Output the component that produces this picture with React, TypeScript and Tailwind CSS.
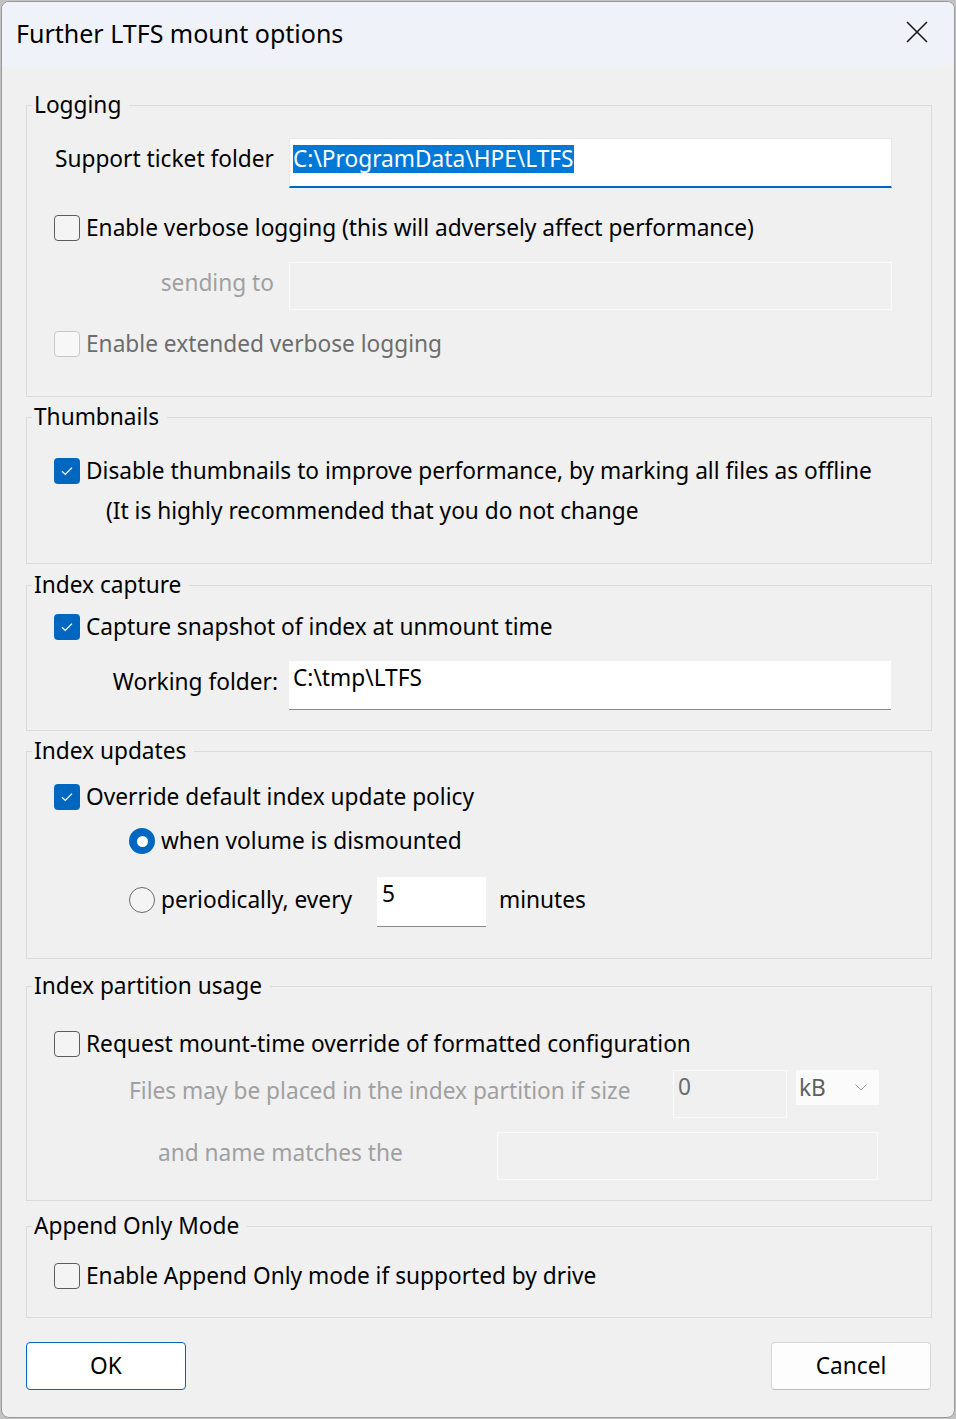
import React from "react";

function CheckBox({ checked = false, disabled = false }: { checked?: boolean; disabled?: boolean }) {
  if (checked) {
    return (
      <div className="w-[26px] h-[26px] shrink-0 rounded-[4px] bg-[#0067c0] flex items-center justify-center">
        <svg width="16" height="12" viewBox="0 0 16 12">
          <path d="M3 6.2 L6.3 9.4 L13 2.6" stroke="white" strokeWidth="1.3" fill="none" />
        </svg>
      </div>
    );
  }
  return (
    <div
      className={
        disabled
          ? "w-[26px] h-[26px] shrink-0 rounded-[4px] border border-[#c8c8c8] bg-[#f7f7f7]"
          : "w-[26px] h-[26px] shrink-0 rounded-[4px] border border-[#5c5c5c] bg-[#f4f4f4]"
      }
    />
  );
}

function Radio({ checked = false }: { checked?: boolean }) {
  if (checked) {
    return (
      <div className="w-[26px] h-[26px] shrink-0 rounded-full bg-[#0067c0] flex items-center justify-center">
        <div className="w-[11px] h-[11px] rounded-full bg-white" />
      </div>
    );
  }
  return <div className="w-[26px] h-[26px] shrink-0 rounded-full border border-[#6a6a6a] bg-[#f4f4f4]" />;
}

function Group({ title, className, children }: { title: string; className: string; children: React.ReactNode }) {
  return (
    <fieldset className={"border border-[#dadada] ml-[24px] mr-[22px] " + className}>
      <legend className="ml-[5px] pl-[2px] pr-[8px] leading-[30px] text-black">{title}</legend>
      {children}
    </fieldset>
  );
}

export default function App() {
  return (
    <div className="w-[956px] h-[1419px] bg-[#c2c2c2] p-[1px] font-['Noto_Sans',sans-serif] text-[22.7px] text-black">
      <div className="h-[1417px] rounded-[8px] border border-[#9a9a9a] bg-[#f0f0f0] overflow-hidden flex flex-col">
        {/* Title bar */}
        <div className="h-[64px] shrink-0 bg-[#eff3f9] flex items-center justify-between">
          <span className="ml-[14px] leading-[30px] text-[25px] mt-[-2px]">Further LTFS mount options</span>
          <svg width="24" height="24" viewBox="0 0 24 24" className="mr-[25px] mt-[-4px]">
            <path d="M2 2 L22 22 M22 2 L2 22" stroke="#1a1a1a" strokeWidth="1.6" fill="none" />
          </svg>
        </div>

        {/* Logging */}
        <Group title="Logging" className="mt-[24px] pb-[37px]">
          <div className="mt-[18px] flex items-center h-[50px]">
            <div className="w-[262px] shrink-0 text-right pr-[15px] mb-[7px]">Support ticket folder</div>
            <div className="w-[603px] h-[50px] bg-white border-x border-t border-[#e6e6e6] border-b-2 border-b-[#0067c0] pl-[3px] pt-[3px] self-start">
              <span className="bg-[#0078d7] text-white leading-[28px] inline-block">C:\ProgramData\HPE\LTFS</span>
            </div>
          </div>
          <div className="mt-[25px] flex items-center h-[30px] ml-[27px] gap-[6px]">
            <CheckBox />
            <span>Enable verbose logging (this will adversely affect performance)</span>
          </div>
          <div className="mt-[19px] flex items-center h-[48px]">
            <div className="w-[262px] shrink-0 text-right pr-[15px] text-[#a0a0a0] mb-[6px]">sending to</div>
            <div className="w-[603px] h-[48px] border border-[#fafafa] bg-[#f0f0f0]" />
          </div>
          <div className="mt-[19px] flex items-center h-[30px] ml-[27px] gap-[6px]">
            <CheckBox disabled />
            <span className="text-[#6d6d6d]">Enable extended verbose logging</span>
          </div>
        </Group>

        {/* Thumbnails */}
        <Group title="Thumbnails" className="mt-[5px] pb-[37px]">
          <div className="mt-[24px] flex items-center h-[30px] ml-[27px] gap-[6px]">
            <CheckBox checked />
            <span>Disable thumbnails to improve performance, by marking all files as offline</span>
          </div>
          <div className="mt-[10px] h-[30px] leading-[30px] ml-[79px]">(It is highly recommended that you do not change</div>
        </Group>

        {/* Index capture */}
        <Group title="Index capture" className="mt-[6px] pb-[20px]">
          <div className="mt-[12px] flex items-center h-[30px] ml-[27px] gap-[6px]">
            <CheckBox checked />
            <span>Capture snapshot of index at unmount time</span>
          </div>
          <div className="mt-[19px] flex items-center h-[49px]">
            <div className="w-[262px] shrink-0 text-right pr-[11px] mb-[7px]">Working folder:</div>
            <div className="w-[602px] h-[49px] bg-white border-b border-b-[#8a8a8a] pl-[4px] pt-[2px] self-start leading-[30px]">
              C:\tmp\LTFS
            </div>
          </div>
        </Group>

        {/* Index updates */}
        <Group title="Index updates" className="mt-[5px] pb-[31px]">
          <div className="mt-[16px] flex items-center h-[30px] ml-[27px] gap-[6px]">
            <CheckBox checked />
            <span>Override default index update policy</span>
          </div>
          <div className="mt-[14px] flex items-center h-[30px] ml-[102px] gap-[6px]">
            <Radio checked />
            <span>when volume is dismounted</span>
          </div>
          <div className="mt-[21px] flex items-center h-[50px] ml-[102px]">
            <div className="w-[248px] shrink-0 flex items-center gap-[6px] mb-[4px]">
              <Radio />
              <span>periodically, every</span>
            </div>
            <div className="w-[109px] h-[50px] bg-white border-b border-b-[#8a8a8a] pl-[5px] pt-[2px] leading-[30px] self-start">5</div>
            <span className="ml-[13px] mb-[4px]">minutes</span>
          </div>
        </Group>

        {/* Index partition usage */}
        <Group title="Index partition usage" className="mt-[12px] pb-[20px]">
          <div className="mt-[28px] flex items-center h-[30px] ml-[27px] gap-[6px]">
            <CheckBox />
            <span>Request mount-time override of formatted configuration</span>
          </div>
          <div className="mt-[11px] flex items-center h-[48px] ml-[102px]">
            <div className="w-[544px] shrink-0 text-[#a0a0a0] mb-[6px]">Files may be placed in the index partition if size</div>
            <div className="w-[114px] h-[48px] border border-[#fafafa] pl-[4px] pt-[1px] leading-[30px] text-[#6d6d6d] self-start">0</div>
            <div className="ml-[9px] w-[83px] h-[35px] bg-[#fbfbfb] flex items-center justify-between pl-[3px] pr-[12px] text-[#5f5f5f] self-start">
              <span className="leading-[30px]">kB</span>
              <svg width="12" height="7" viewBox="0 0 12 7">
                <path d="M0.5 0.5 L6 6 L11.5 0.5" stroke="#a0a0a0" strokeWidth="1" fill="none" />
              </svg>
            </div>
          </div>
          <div className="mt-[14px] flex items-center h-[48px] ml-[131px]">
            <div className="w-[339px] shrink-0 text-[#a0a0a0] mb-[6px]">and name matches the</div>
            <div className="w-[381px] h-[48px] border border-[#fafafa]" />
          </div>
        </Group>

        {/* Append Only Mode */}
        <Group title="Append Only Mode" className="mt-[10px] pb-[26px]">
          <div className="mt-[20px] flex items-center h-[30px] ml-[27px] gap-[6px]">
            <CheckBox />
            <span>Enable Append Only mode if supported by drive</span>
          </div>
        </Group>

        {/* Buttons */}
        <div className="mt-[24px] flex justify-between ml-[24px] mr-[23px]">
          <button className="w-[160px] h-[48px] rounded-[4px] border border-[#0067c0] bg-white text-black">OK</button>
          <button className="w-[160px] h-[48px] rounded-[4px] border border-[#d6d6d6] border-b-[#bdbdbd] bg-[#fdfdfd] text-black">Cancel</button>
        </div>
      </div>
    </div>
  );
}
